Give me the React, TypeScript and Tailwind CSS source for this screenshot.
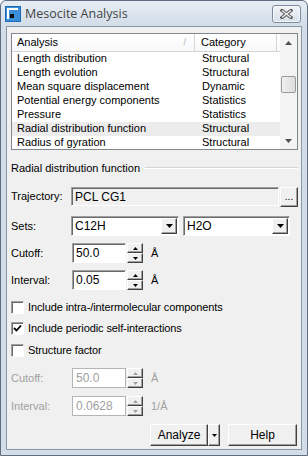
import React from 'react';

const rows = [
  ['Length distribution', 'Structural'],
  ['Length evolution', 'Structural'],
  ['Mean square displacement', 'Dynamic'],
  ['Potential energy components', 'Statistics'],
  ['Pressure', 'Statistics'],
  ['Radial distribution function', 'Structural'],
  ['Radius of gyration', 'Structural'],
];

const raised =
  'border border-t-white border-l-white border-r-[#404040] border-b-[#404040] shadow-[inset_-1px_-1px_0_#a0a0a0] bg-[#f0f0f0]';
const sunken =
  'border border-t-[#a0a0a0] border-l-[#a0a0a0] border-r-white border-b-white shadow-[inset_1px_1px_0_#696969]';

const Tri = ({ up = false, color = '#000', w = 7 }: { up?: boolean; color?: string; w?: number }) => (
  <svg width={w} height={Math.ceil(w / 2)} viewBox={`0 0 ${w} ${Math.ceil(w / 2)}`}>
    {up ? (
      <path d={`M0 ${Math.ceil(w / 2)} L${w / 2} 0 L${w} ${Math.ceil(w / 2)} Z`} fill={color} />
    ) : (
      <path d={`M0 0 L${w} 0 L${w / 2} ${Math.ceil(w / 2)} Z`} fill={color} />
    )}
  </svg>
);

const Spinner = ({ disabled = false }: { disabled?: boolean }) => {
  const c = disabled ? '#a0a0a0' : '#000';
  return (
    <div className="flex h-full w-[16px] flex-col">
      <div className={`flex flex-1 items-center justify-center ${raised}`}>
        <Tri up w={5} color={c} />
      </div>
      <div className={`flex flex-1 items-center justify-center ${raised}`}>
        <Tri w={5} color={c} />
      </div>
    </div>
  );
};

const Combo = ({ value, width }: { value: string; width: string }) => (
  <div className={`flex h-full items-stretch bg-white ${sunken} ${width}`}>
    <span className="flex flex-1 items-center pl-[3px]">{value}</span>
    <div className={`my-[1px] mr-[1px] flex w-[16px] items-center justify-center ${raised}`}>
      <Tri w={7} />
    </div>
  </div>
);

const Check = ({ checked = false, label }: { checked?: boolean; label: string }) => (
  <div className="flex h-[13px] items-center gap-[4px]">
    <div className={`flex h-[13px] w-[13px] items-center justify-center bg-white ${sunken}`}>
      {checked && (
        <svg width="9" height="9" viewBox="0 0 9 9">
          <path d="M1 4 L3.5 6.5 L8 1.5" stroke="#000" strokeWidth="1.8" fill="none" />
        </svg>
      )}
    </div>
    <span className="tracking-[-0.1px]">{label}</span>
  </div>
);

const NumRow = ({
  label,
  value,
  unit,
  disabled = false,
  className = '',
}: {
  label: string;
  value: string;
  unit: string;
  disabled?: boolean;
  className?: string;
}) => (
  <div className={`flex h-[20px] items-center ${className} ${disabled ? 'text-[#a0a0a0]' : ''}`}>
    <span className="w-[61px]">{label}</span>
    <div
      className={`flex h-full w-[54px] items-center bg-white pl-[3px] text-[12px] ${
        disabled ? 'border border-[#b5b5b5]' : sunken
      }`}
    >
      {value}
    </div>
    <div className="ml-[1px] h-full">
      <Spinner disabled={disabled} />
    </div>
    <span className="ml-[8px] text-[11px]">{unit}</span>
  </div>
);

export default function App() {
  return (
    <div
      className="flex h-[456px] w-[308px] flex-col rounded-t-[6px] border border-[#5f6e80] bg-[#d3dde8] text-[11px] text-black"
      style={{ fontFamily: '"Liberation Sans", Arial, sans-serif' }}
    >
      {/* title bar */}
      <div className="flex h-[25px] items-start rounded-t-[6px] bg-gradient-to-b from-[#e6edf4] to-[#d3dde8]">
        <div className="ml-[4px] mt-[4px] flex items-center gap-[4px]">
          <svg width="16" height="16" viewBox="0 0 16 16">
            <rect x="0" y="0" width="16" height="16" fill="#1c6cb5" />
            <rect x="1" y="1" width="14" height="14" fill="#3a8fd8" />
            <path d="M3 13 V3 H13" stroke="#fff" strokeWidth="2" fill="none" />
            <rect x="5" y="8" width="4" height="4" fill="#101010" />
          </svg>
          <span
            className="text-[12.5px] text-[#444]"
            style={{ fontFamily: '"Open Sans", "Noto Sans", sans-serif' }}
          >
            Mesocite Analysis
          </span>
        </div>
        <div className="ml-auto mr-[6px] mt-[4px] flex h-[18px] w-[29px] items-center justify-center rounded-[3px] border border-[#7b8b9e] bg-gradient-to-b from-[#f2f5f9] to-[#d6dfe9] shadow-[inset_0_0_0_1px_#f6f8fb]">
          <svg width="13" height="10" viewBox="0 0 13 10">
            <path d="M2 1.5 L11 8.5 M11 1.5 L2 8.5" stroke="#5a5a5a" strokeWidth="3.4" strokeLinecap="square" />
            <path d="M2 1.5 L11 8.5 M11 1.5 L2 8.5" stroke="#f4f4f4" strokeWidth="1.3" />
          </svg>
        </div>
      </div>

      {/* body */}
      <div className="mx-[5px] mb-[5px] flex flex-1 flex-col border border-[#8a98a8] bg-[#f0f0f0] pl-[4px] pr-[3px]">
        {/* list view */}
        <div className="mt-[6px] flex h-[117px] border border-[#828790] bg-white">
          <div className="flex flex-1 flex-col overflow-hidden">
            <div className="flex h-[19px] border-b border-[#d5d5d5] bg-gradient-to-b from-white to-[#f7f8fa]">
              <div className="relative flex w-[183px] items-center border-r border-[#d5d5d5] pl-[5px]">
                Analysis
                <span className="absolute right-[8px] text-[9px] text-[#b0b0b0]">/</span>
              </div>
              <div className="flex w-[82px] items-center border-r border-[#d5d5d5] pl-[6px]">Category</div>
            </div>
            {rows.map(([name, cat], i) => (
              <div
                key={name}
                className={`flex h-[14px] shrink-0 items-center ${i === 5 ? 'bg-[#ececec]' : ''}`}
              >
                <span className="w-[183px] pl-[5px]">{name}</span>
                <span className="pl-[7px]">{cat}</span>
              </div>
            ))}
          </div>
          {/* scrollbar */}
          <div className="flex w-[17px] flex-col bg-[#f3f3f3]">
            <div className="flex h-[17px] items-center justify-center">
              <Tri up w={7} color="#505050" />
            </div>
            <div className="mx-[1px] mt-[25px] h-[17px] rounded-[2px] border border-[#9a9a9a] bg-gradient-to-r from-[#f0f0f0] to-[#dcdcdc]" />
            <div className="mt-auto flex h-[17px] items-center justify-center">
              <Tri w={7} color="#505050" />
            </div>
          </div>
        </div>

        {/* section */}
        <div className="mt-[11px] flex h-[14px] items-center">
          <span>Radial distribution function</span>
          <div className="ml-[5px] flex-1 border-t border-b border-t-[#d5d5d5] border-b-white" />
        </div>

        <div className="mt-[12px] flex h-[19px] items-center">
          <span className="w-[60px]">Trajectory:</span>
          <div className={`flex h-full w-[208px] items-center bg-[#f0f0f0] pl-[3px] text-[12px] ${sunken}`}>
            PCL CG1
          </div>
          <div className={`ml-[1px] flex h-[20px] w-[18px] items-center justify-center text-[10px] ${raised}`}>
            ...
          </div>
        </div>

        <div className="mt-[10px] flex h-[20px] items-center text-[12px]">
          <span className="w-[60px] text-[11px]">Sets:</span>
          <Combo value="C12H" width="w-[108px]" />
          <div className="ml-[4px] h-full">
            <Combo value="H2O" width="w-[107px]" />
          </div>
        </div>

        <NumRow label="Cutoff:" value="50.0" unit="Å" className="mt-[7px]" />
        <NumRow label="Interval:" value="0.05" unit="Å" className="mt-[7px]" />

        <div className="mt-[11px] flex flex-col gap-[8px]">
          <Check label="Include intra-/intermolecular components" />
          <Check checked label="Include periodic self-interactions" />
          <div className="mt-[1px]">
            <Check label="Structure factor" />
          </div>
        </div>

        <NumRow disabled label="Cutoff:" value="50.0" unit="Å" className="mt-[11px]" />
        <NumRow disabled label="Interval:" value="0.0628" unit="1/Å" className="mt-[8px]" />

        <div className="mt-[8px] flex h-[22px] justify-end pr-[1px] text-[12px]">
          <div className={`flex w-[58px] items-center justify-center ${raised}`}>Analyze</div>
          <div className={`flex w-[12px] items-center justify-center ${raised}`}>
            <Tri w={5} />
          </div>
          <div className={`ml-[8px] flex w-[69px] items-center justify-center ${raised}`}>Help</div>
        </div>
      </div>
    </div>
  );
}
